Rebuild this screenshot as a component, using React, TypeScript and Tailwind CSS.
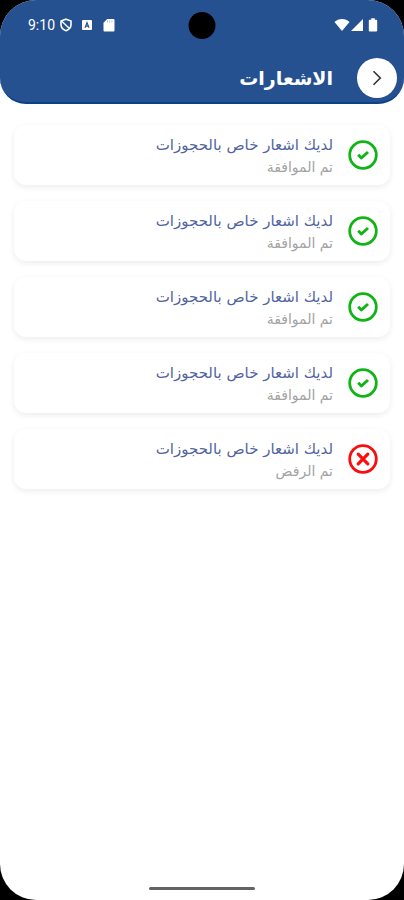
import React from 'react';

type Status = 'approved' | 'rejected';

type Notification = {
  id: number;
  title: string;
  message: string;
  status: Status;
};

const notifications: Notification[] = [
  { id: 1, title: 'لديك اشعار خاص بالحجوزات', message: 'تم الموافقة', status: 'approved' },
  { id: 2, title: 'لديك اشعار خاص بالحجوزات', message: 'تم الموافقة', status: 'approved' },
  { id: 3, title: 'لديك اشعار خاص بالحجوزات', message: 'تم الموافقة', status: 'approved' },
  { id: 4, title: 'لديك اشعار خاص بالحجوزات', message: 'تم الموافقة', status: 'approved' },
  { id: 5, title: 'لديك اشعار خاص بالحجوزات', message: 'تم الرفض', status: 'rejected' },
];

const StatusIcon: React.FC<{ status: Status }> = ({ status }) => {
  if (status === 'approved') {
    return (
      <svg viewBox="0 0 30 30" className="size-[30px] shrink-0" fill="none" stroke="#10b515" aria-hidden="true">
        <circle cx="15" cy="15" r="13.3" strokeWidth="2.8" />
        <path d="M10.2 14.8l3.2 3.2 6.600-6" strokeWidth="3" strokeLinejoin="round" />
      </svg>
    );
  }
  return (
    <svg viewBox="0 0 30 30" className="size-[30px] shrink-0" fill="none" stroke="#fb0d0d" aria-hidden="true">
      <circle cx="15" cy="15" r="13.3" strokeWidth="2.8" />
      <path d="M10.2 10.2l9.6 9.6M19.8 10.2l-9.6 9.6" strokeWidth="3.2" strokeLinecap="round" />
    </svg>
  );
};

const StatusBar = () => (
  <div dir="ltr" className="relative flex h-[50px] items-center justify-between pl-7 pr-[26px] text-white">
    <div className="flex items-center">
      <span className="font-[Roboto,sans-serif] text-sm">9:10</span>
      <svg viewBox="0 0 14 14" className="ml-1 size-[14px]" fill="none" stroke="currentColor" aria-hidden="true">
        <path d="M7 1.2l5 1.8v3.6c0 3-2 5.2-5 6.2-3-1-5-3.2-5-6.2V3z" strokeWidth="1.6" />
        <path d="M2.5 3l8 7.5" strokeWidth="1.4" />
        <path d="M6 3.5l1-1 4 1.2v3l-1 1.3z" fill="#255191" stroke="none" />
      </svg>
      <svg viewBox="0 0 10 10" className="ml-[9px] size-[10px]" aria-hidden="true">
        <rect width="10" height="10" rx="1" fill="white" />
        <path d="M3 7.8l2-5.200 2 5.200M3.7 6.2h2.6" fill="none" stroke="#255191" strokeWidth="1.2" />
      </svg>
      <svg viewBox="0 0 12 14" className="ml-[11px] h-[14px] w-3" aria-hidden="true">
        <path d="M4.2 1h6.3a1 1 0 0 1 1 1v10.5a1 1 0 0 1-1 1h-9a1 1 0 0 1-1-1V4.7z" fill="white" />
        <path d="M4.5 2.5v2M6.7 2.5v2M8.9 2.5v2" stroke="#b4c5de" strokeWidth="1" />
      </svg>
    </div>
    <span className="absolute left-1/2 top-3 size-[27px] -translate-x-1/2 rounded-full bg-black" />
    <div className="flex items-center">
      <svg viewBox="0 0 16 14" className="h-[14px] w-4" fill="white" aria-hidden="true">
        <path d="M8 13L.5 4C2.5 2 5 1 8 1s5.5 1 7.5 3z" />
      </svg>
      <svg viewBox="0 0 14 14" className="size-[14px]" fill="white" aria-hidden="true">
        <path d="M13 1v12H1z" />
      </svg>
      <svg viewBox="0 0 10 14" className="ml-1 h-[14px] w-[10px]" fill="white" aria-hidden="true">
        <path d="M3.2.3h3.6v1.5h1.4a1 1 0 0 1 1 1v9.7a1 1 0 0 1-1 1H1.8a1 1 0 0 1-1-1V2.8a1 1 0 0 1 1-1h1.4z" />
      </svg>
    </div>
  </div>
);

const Header = () => (
  <header className="rounded-b-[26px] border-b-2 border-[#0c4087] bg-[#255191]">
    <StatusBar />
    <div className="flex items-center gap-6 px-[7px] pb-1 pt-2">
      <button
        type="button"
        aria-label="رجوع"
        className="flex size-10 shrink-0 items-center justify-center rounded-full bg-white"
      >
        <svg viewBox="0 0 10 16" className="h-4 w-[10px]" fill="none" stroke="#333333" strokeWidth="1.6" aria-hidden="true">
          <path d="M1.5 1.2L8.3 8l-6.8 6.8" />
        </svg>
      </button>
      <h1 className="text-[19px] font-bold leading-8 text-white">الاشعارات</h1>
    </div>
  </header>
);

const NotificationCard: React.FC<{ item: Notification }> = ({ item }) => (
  <li className="flex items-center gap-[15px] rounded-xl bg-white px-3 py-2 shadow-[0_2px_6px_rgba(0,0,0,0.08)]">
    <StatusIcon status={item.status} />
    <div className="min-w-0">
      <h2 className="text-[15px] leading-6 text-[#52659f]">{item.title}</h2>
      <p className="text-sm leading-5 text-[#a3a3a3]">{item.message}</p>
    </div>
  </li>
);

export default function App() {
  return (
    <div className="min-h-screen bg-black">
      <div
        dir="rtl"
        className="flex min-h-screen flex-col overflow-hidden rounded-[36px] bg-white font-['DejaVu_Sans',sans-serif]"
      >
        <Header />
        <main className="flex-1 px-[14px] pt-[21px]">
          <ul className="flex flex-col gap-4">
            {notifications.map(item => (
              <NotificationCard key={item.id} item={item} />
            ))}
          </ul>
        </main>
        <div className="flex justify-center pb-[10px]">
          <span className="h-[3px] w-[106px] rounded-full bg-[#646464]" />
        </div>
      </div>
    </div>
  );
}
